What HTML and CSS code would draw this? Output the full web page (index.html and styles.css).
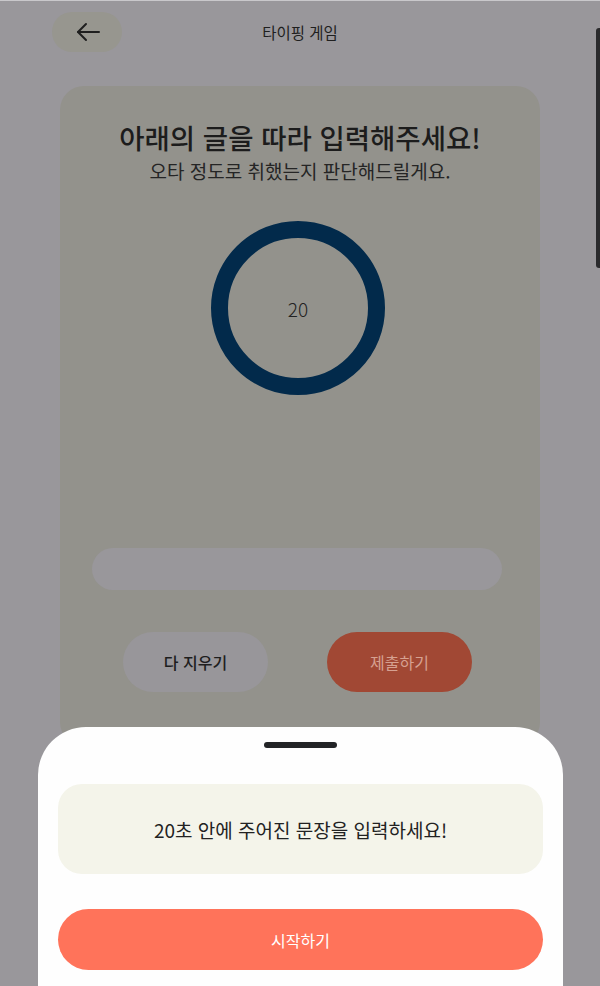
FILE: index.html
```html
<!DOCTYPE html>
<html lang="ko">
<head>
<meta charset="utf-8">
<title>타이핑 게임</title>
<link rel="stylesheet" href="styles.css">
</head>
<body>
<div class="page">
  <header class="header">
    <button class="back" aria-label="뒤로">
      <svg width="26" height="20" viewBox="0 0 26 20" fill="none" stroke="#1f1f1f" stroke-width="2" stroke-linecap="round" stroke-linejoin="round">
        <path d="M24 10H3"/>
        <path d="M11 2L3 10L11 18"/>
      </svg>
    </button>
    <h1 class="title">타이핑 게임</h1>
  </header>

  <main class="card">
    <h2 class="heading">아래의 글을 따라 입력해주세요!</h2>
    <p class="sub">오타 정도로 취했는지 판단해드릴게요.</p>
    <div class="timer"><span>20</span></div>
    <div class="input"></div>
    <div class="actions">
      <button class="btn clear">다 지우기</button>
      <button class="btn submit">제출하기</button>
    </div>
  </main>
</div>

<div class="scrollbar"></div>

<section class="sheet">
  <div class="handle"></div>
  <div class="info">20초 안에 주어진 문장을 입력하세요!</div>
  <button class="start">시작하기</button>
</section>
</body>
</html>
```

FILE: styles.css
```css
* { box-sizing: border-box; }
html, body {
  margin: 0;
  padding: 0;
  height: 986px;
  overflow: hidden;
}
body {
  background: #99979b;
  font-family: "Noto Sans CJK KR", "Noto Sans", sans-serif;
  color: #1f1f1f;
  border-top: 1px solid #c9c8cb;
}
.page {
  display: flex;
  flex-direction: column;
  align-items: center;
}
.header {
  position: relative;
  width: 100%;
  height: 64px;
  display: flex;
  align-items: center;
  justify-content: center;
}
.back {
  position: absolute;
  left: 52px;
  top: 11px;
  width: 70px;
  height: 40px;
  border: none;
  border-radius: 20px;
  background: #97968f;
  display: flex;
  align-items: center;
  justify-content: center;
  padding: 0 0 0 2px;
}
.title {
  margin: 0;
  font-size: 15.5px;
  font-weight: 400;
  line-height: 1;
  margin-top: 0;
  color: #1f1f1f;
}
.card {
  margin-top: 21px;
  width: 480px;
  height: 660px;
  border-radius: 24px;
  background: #93928c;
  display: flex;
  flex-direction: column;
  align-items: center;
  padding-top: 33px;
}
.heading {
  margin: 0;
  font-size: 27.5px;
  font-weight: 500;
  line-height: 36px;
  color: #1c1c1c;
  letter-spacing: 0;
}
.sub {
  margin: 3px 0 0;
  font-size: 19px;
  line-height: 26px;
  font-weight: 400;
  color: #252525;
}
.timer {
  margin-top: 37px;
  margin-right: 4px;
  width: 174px;
  height: 174px;
  border-radius: 50%;
  border: 17px solid #022a4b;
  display: flex;
  align-items: center;
  justify-content: center;
  font-size: 19px;
  font-weight: 300;
  color: #222;
}
.input {
  margin-top: 153px;
  margin-right: 6px;
  width: 410px;
  height: 42px;
  border-radius: 21px;
  background: #99979b;
}
.actions {
  margin-top: 42px;
  margin-right: 5px;
  display: flex;
  gap: 59px;
}
.btn {
  width: 145px;
  height: 60px;
  border: none;
  border-radius: 30px;
  font-family: inherit;
  font-size: 16px;
  font-weight: 500;
}
.clear {
  background: #98969a;
  color: #1e1e1e;
}
.submit {
  background: #a14834;
  color: #d6a191;
  font-weight: 400;
}
.scrollbar {
  position: absolute;
  right: 0;
  top: 28px;
  width: 4px;
  height: 240px;
  border-radius: 3px 0 0 3px;
  background: #2a2a2c;
}
.sheet {
  position: absolute;
  left: 38px;
  top: 727px;
  width: 525px;
  height: 280px;
  background: #fefefe;
  border-radius: 48px 48px 0 0;
  display: flex;
  flex-direction: column;
  align-items: center;
  padding: 15px 20px 0;
}
.handle {
  width: 73px;
  height: 6px;
  border-radius: 3px;
  background: #222426;
}
.info {
  margin-top: 36px;
  width: 100%;
  height: 90px;
  border-radius: 24px;
  background: #f4f4ea;
  display: flex;
  align-items: center;
  justify-content: center;
  font-size: 19px;
  color: #222;
}
.start {
  margin-top: 35px;
  width: 100%;
  height: 61px;
  border: none;
  border-radius: 31px;
  background: #ff735a;
  color: #fff;
  font-family: inherit;
  font-size: 16px;
  font-weight: 400;
}
```
